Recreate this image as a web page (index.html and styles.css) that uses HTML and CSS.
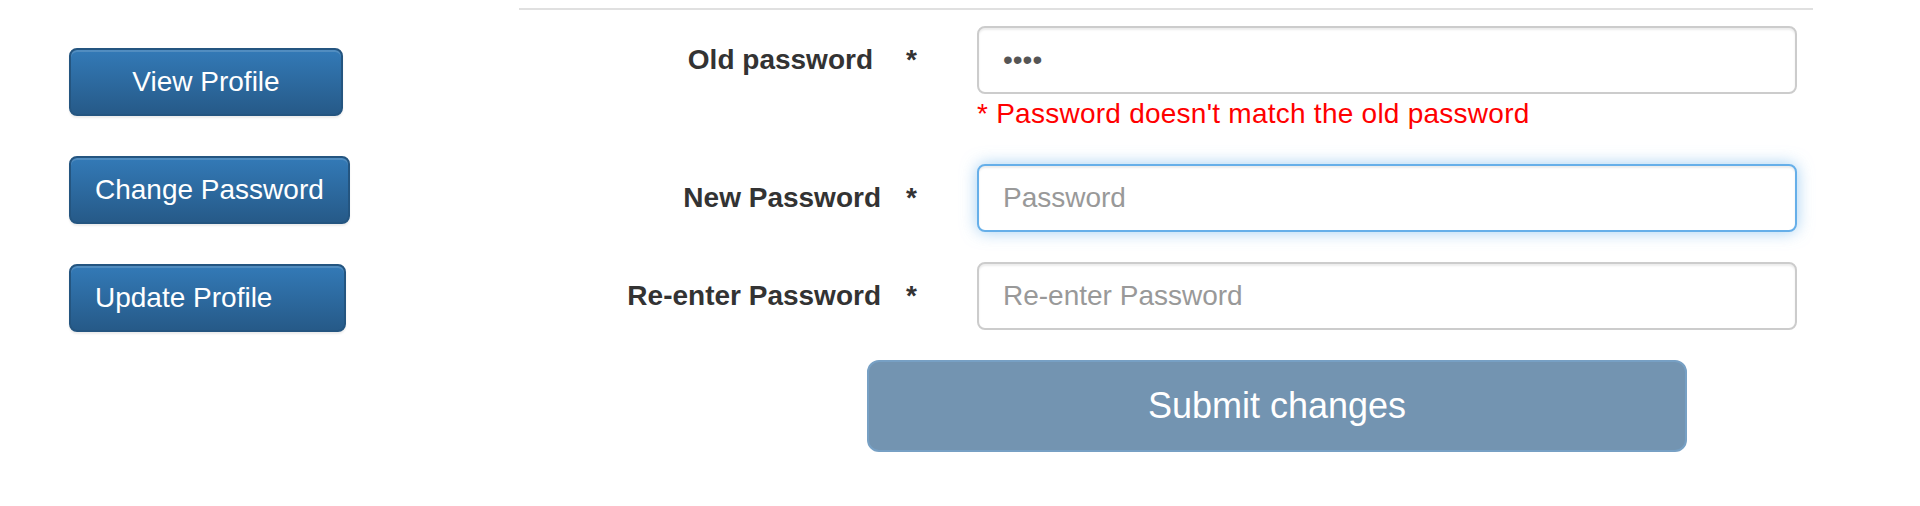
FILE: index.html
```html
<!DOCTYPE html>
<html lang="en">
<head>
<meta charset="utf-8">
<title>Change Password</title>
<link rel="stylesheet" href="styles.css">
</head>
<body>
<div class="page">
  <nav class="side">
    <a class="side-btn side-btn--view" href="#">View Profile</a>
    <a class="side-btn" href="#">Change Password</a>
    <a class="side-btn side-btn--update" href="#">Update Profile</a>
  </nav>
  <main class="panel">
    <form class="pw-form">
      <div class="row">
        <label class="lbl lbl--old">Old password</label>
        <span class="req">*</span>
        <div class="field">
          <input type="password" class="ctl" value="abcd">
          <div class="err">* Password doesn't match the old password</div>
        </div>
      </div>
      <div class="row">
        <label class="lbl">New Password</label>
        <span class="req">*</span>
        <div class="field">
          <input type="password" class="ctl ctl--focus" placeholder="Password">
        </div>
      </div>
      <div class="row">
        <label class="lbl">Re-enter Password</label>
        <span class="req">*</span>
        <div class="field">
          <input type="password" class="ctl" placeholder="Re-enter Password">
        </div>
      </div>
      <div class="actions">
        <button type="button" class="submit">Submit changes</button>
      </div>
    </form>
  </main>
</div>
</body>
</html>
```
FILE: styles.css
```css
body {
  margin: 0;
  background: #fff;
  font-family: "Liberation Sans", Arial, sans-serif;
}

.page {
  display: flex;
  align-items: flex-start;
}

.side {
  box-sizing: border-box;
  width: 519px;
  flex: none;
  display: flex;
  flex-direction: column;
  align-items: flex-start;
  gap: 40px;
  padding: 48px 0 0 69px;
}

.side-btn {
  box-sizing: border-box;
  height: 68px;
  padding: 0 24px;
  border: 2px solid #245580;
  border-radius: 8px;
  background: linear-gradient(#337ab7, #265a88);
  color: #fff;
  font-size: 28px;
  line-height: 64px;
  text-decoration: none;
  white-space: nowrap;
  box-shadow: inset 0 2px 0 rgba(255, 255, 255, 0.15), 0 2px 2px rgba(0, 0, 0, 0.075);
}

.side-btn--view {
  width: 274px;
  text-align: center;
}

.side-btn--update {
  width: 277px;
}

.panel {
  width: 1294px;
  flex: none;
  margin-top: 8px;
  padding-top: 16px;
  border-top: 2px solid #e0e0e0;
}

.row {
  display: grid;
  grid-template-columns: 362px 96px 820px;
  margin-bottom: 30px;
}

.lbl,
.req {
  padding-top: 14px;
  font-size: 28px;
  line-height: 40px;
  font-weight: bold;
  color: #333;
}

.lbl {
  text-align: right;
  white-space: nowrap;
}

.lbl--old {
  padding-right: 8px;
}

.req {
  padding-left: 25px;
}

.ctl {
  display: block;
  box-sizing: border-box;
  width: 820px;
  height: 68px;
  margin: 0;
  padding: 12px 24px;
  border: 2px solid #ccc;
  border-radius: 8px;
  background: #fff;
  font-family: inherit;
  font-size: 28px;
  color: #555;
  outline: none;
  box-shadow: inset 0 2px 2px rgba(0, 0, 0, 0.075);
}

.ctl::placeholder {
  color: #999;
}

.ctl--focus {
  border-color: #66afe9;
  box-shadow: inset 0 2px 2px rgba(0, 0, 0, 0.075), 0 0 16px rgba(102, 175, 233, 0.6);
}

.err {
  color: #f00;
  font-size: 28px;
  line-height: 40px;
  letter-spacing: 0.25px;
}

.actions {
  padding-left: 348px;
}

.submit {
  box-sizing: border-box;
  width: 820px;
  height: 92px;
  margin: 0;
  border: 2px solid #77a0c4;
  border-radius: 12px;
  background: #7394b1;
  color: #fff;
  font-family: inherit;
  font-size: 36px;
  cursor: not-allowed;
}
```
